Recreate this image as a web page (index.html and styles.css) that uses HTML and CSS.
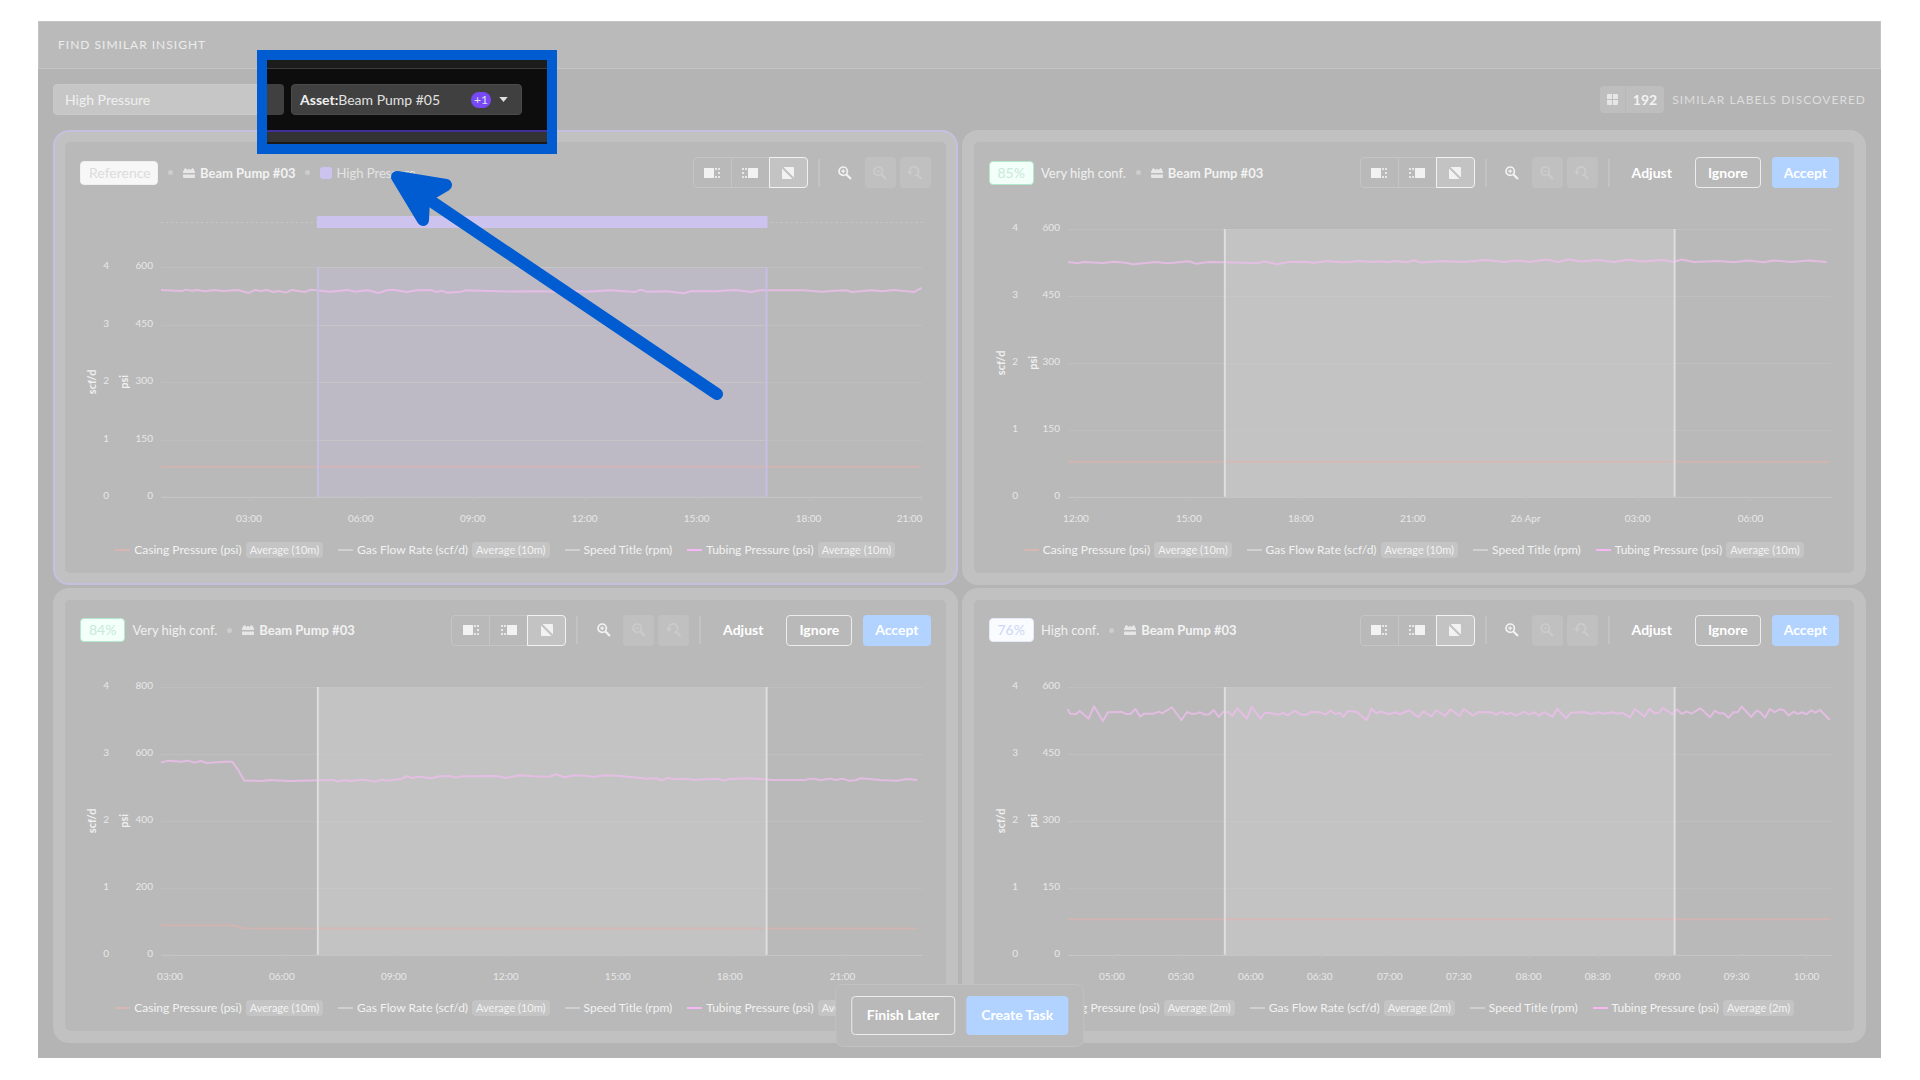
FILE: index.html
```html
<!DOCTYPE html>
<html lang="en">
<head>
<meta charset="utf-8">
<title>Find Similar Insight</title>
<link rel="stylesheet" href="styles.css">
</head>
<body>
<svg class="sprite" aria-hidden="true">
  <symbol id="i-brick" viewBox="0 0 12 12"><path d="M0 6V4.500A1 1 0 0 1 1 3.500V2.200L2.500 1 4 2.200l.5.800L6 1.800 7.500 3l.5-.800L9.500 1 11 2.200v1.300a1 1 0 0 1 1 1V6zM0 7.500h12V10a1 1 0 0 1-1 1H1a1 1 0 0 1-1-1z"/></symbol>
  <symbol id="i-left" viewBox="0 0 16 12"><path d="M0 1h10v10H0z"/><path d="M11 1h2v2h-2zM14 1h2v2h-2zM11 9h2v2h-2zM14 9h2v2h-2zM14 5h2v2h-2z" opacity=".8"/></symbol>
  <symbol id="i-right" viewBox="0 0 16 12"><path d="M6 1h10v10H6z"/><path d="M0 1h2v2H0zM3 1h2v2H3zM0 9h2v2H0zM3 9h2v2H3zM0 5h2v2H0z" opacity=".8"/></symbol>
  <symbol id="i-none" viewBox="0 0 12 12"><path d="M1.500 0H11a1 1 0 0 1 1 1v9.500zM0 1.500 10.500 12H1a1 1 0 0 1-1-1z"/></symbol>
  <symbol id="i-zoom-in" viewBox="0 0 14 14"><g fill="none" stroke="currentColor"><circle cx="5.200" cy="5.200" r="4.200" stroke-width="1.700"/><path d="m8.500 8.500 4.500 4.500" stroke-width="2.200"/><path d="M5.200 3.200v4M3.200 5.200h4" stroke-width="1.200"/></g></symbol>
  <symbol id="i-zoom-out" viewBox="0 0 14 14"><g fill="none" stroke="currentColor"><circle cx="5.200" cy="5.200" r="4.200" stroke-width="1.700"/><path d="m8.500 8.500 4.500 4.500" stroke-width="2.200"/><path d="M3.200 5.200h4" stroke-width="1.200"/></g></symbol>
  <symbol id="i-zoom-reset" viewBox="0 0 16 14"><path d="M2.800 6A4.400 4.400 0 1 1 8 9.600M10 8.500l4.500 4.500" fill="none" stroke="currentColor" stroke-width="1.800"/><path d="M0 5.500h6L3 9z"/></symbol>
  <symbol id="i-grid" viewBox="0 0 12 12"><path d="M1 0h4.500v5.500H0V1a1 1 0 0 1 1-1zM6.500 0H11a1 1 0 0 1 1 1v4.500H6.500zM0 6.500h5.500V12H1a1 1 0 0 1-1-1zM6.500 6.500H12V11a1 1 0 0 1-1 1H6.500z"/></symbol>
</svg>

<main class="app">
  <header class="topbar"><h1>Find Similar Insight</h1></header>

  <div class="filters">
    <input class="field" type="text" value="High Pressure" aria-label="Label">
    <div class="found">
      <span class="count"><svg><use href="#i-grid"/></svg><b>192</b></span>
      <span>Similar labels discovered</span>
    </div>
  </div>

  <div class="cards">
    <section class="card card-reference">
      <div class="panel">
        <div class="bar">
          <div class="facts">
            <span class="badge badge-ref">Reference</span><i class="dot"></i>
            <span class="asset"><svg><use href="#i-brick"/></svg>Beam Pump #03</span><i class="dot"></i>
            <span class="tag"><i class="swatch"></i>High Pressure</span>
          </div>
          <div class="tools">
            <div class="segments">
              <button aria-label="Keep left"><svg><use href="#i-left"/></svg></button>
              <button aria-label="Keep right"><svg><use href="#i-right"/></svg></button>
              <button class="on" aria-label="No shift"><svg class="sq"><use href="#i-none"/></svg></button>
            </div>
            <i class="rule"></i>
            <div class="zooms">
              <button aria-label="Zoom in"><svg><use href="#i-zoom-in"/></svg></button>
              <button disabled aria-label="Zoom out"><svg><use href="#i-zoom-out"/></svg></button>
              <button disabled aria-label="Reset zoom"><svg class="wide"><use href="#i-zoom-reset"/></svg></button>
            </div>
          </div>
        </div>
        <svg class="chart" data-chart="0" viewBox="0 0 881 330"></svg>
        <ul class="legend" data-window="10m"></ul>
      </div>
    </section>

    <section class="card">
      <div class="panel">
        <div class="bar">
          <div class="facts">
            <span class="badge badge-green">85%</span><span class="conf">Very high conf.</span><i class="dot"></i>
            <span class="asset"><svg><use href="#i-brick"/></svg>Beam Pump #03</span>
          </div>
          <div class="tools">
            <div class="segments">
              <button aria-label="Keep left"><svg><use href="#i-left"/></svg></button>
              <button aria-label="Keep right"><svg><use href="#i-right"/></svg></button>
              <button class="on" aria-label="No shift"><svg class="sq"><use href="#i-none"/></svg></button>
            </div>
            <i class="rule"></i>
            <div class="zooms">
              <button aria-label="Zoom in"><svg><use href="#i-zoom-in"/></svg></button>
              <button disabled aria-label="Zoom out"><svg><use href="#i-zoom-out"/></svg></button>
              <button disabled aria-label="Reset zoom"><svg class="wide"><use href="#i-zoom-reset"/></svg></button>
            </div>
            <i class="rule"></i>
            <div class="actions"><button class="btn btn-text">Adjust</button><button class="btn btn-line">Ignore</button><button class="btn btn-fill">Accept</button></div>
          </div>
        </div>
        <svg class="chart" data-chart="1" viewBox="0 0 881 330"></svg>
        <ul class="legend" data-window="10m"></ul>
      </div>
    </section>

    <section class="card">
      <div class="panel">
        <div class="bar">
          <div class="facts">
            <span class="badge badge-green">84%</span><span class="conf">Very high conf.</span><i class="dot"></i>
            <span class="asset"><svg><use href="#i-brick"/></svg>Beam Pump #03</span>
          </div>
          <div class="tools">
            <div class="segments">
              <button aria-label="Keep left"><svg><use href="#i-left"/></svg></button>
              <button aria-label="Keep right"><svg><use href="#i-right"/></svg></button>
              <button class="on" aria-label="No shift"><svg class="sq"><use href="#i-none"/></svg></button>
            </div>
            <i class="rule"></i>
            <div class="zooms">
              <button aria-label="Zoom in"><svg><use href="#i-zoom-in"/></svg></button>
              <button disabled aria-label="Zoom out"><svg><use href="#i-zoom-out"/></svg></button>
              <button disabled aria-label="Reset zoom"><svg class="wide"><use href="#i-zoom-reset"/></svg></button>
            </div>
            <i class="rule"></i>
            <div class="actions"><button class="btn btn-text">Adjust</button><button class="btn btn-line">Ignore</button><button class="btn btn-fill">Accept</button></div>
          </div>
        </div>
        <svg class="chart" data-chart="2" viewBox="0 0 881 330"></svg>
        <ul class="legend" data-window="10m"></ul>
      </div>
    </section>

    <section class="card">
      <div class="panel">
        <div class="bar">
          <div class="facts">
            <span class="badge badge-blue">76%</span><span class="conf">High conf.</span><i class="dot"></i>
            <span class="asset"><svg><use href="#i-brick"/></svg>Beam Pump #03</span>
          </div>
          <div class="tools">
            <div class="segments">
              <button aria-label="Keep left"><svg><use href="#i-left"/></svg></button>
              <button aria-label="Keep right"><svg><use href="#i-right"/></svg></button>
              <button class="on" aria-label="No shift"><svg class="sq"><use href="#i-none"/></svg></button>
            </div>
            <i class="rule"></i>
            <div class="zooms">
              <button aria-label="Zoom in"><svg><use href="#i-zoom-in"/></svg></button>
              <button disabled aria-label="Zoom out"><svg><use href="#i-zoom-out"/></svg></button>
              <button disabled aria-label="Reset zoom"><svg class="wide"><use href="#i-zoom-reset"/></svg></button>
            </div>
            <i class="rule"></i>
            <div class="actions"><button class="btn btn-text">Adjust</button><button class="btn btn-line">Ignore</button><button class="btn btn-fill">Accept</button></div>
          </div>
        </div>
        <svg class="chart" data-chart="3" viewBox="0 0 881 330"></svg>
        <ul class="legend" data-window="2m"></ul>
      </div>
    </section>
  </div>

  <div class="dock">
    <button class="btn btn-line">Finish Later</button>
    <button class="btn btn-fill">Create Task</button>
  </div>

  <div class="spotlight">
    <div class="spot-top"></div>
    <div class="spot-row">
      <i class="field-end"></i>
      <div class="asset-filter">
        <label for="asset">Asset:</label>
        <select id="asset"><option>Beam Pump #05</option></select>
        <span class="more">+1</span>
        <svg viewBox="0 0 10 6"><path d="M0 0h10L5 6z"/></svg>
      </div>
    </div>
    <div class="spot-card"></div>
  </div>
  <svg class="pointer" viewBox="0 0 340 240" aria-hidden="true">
    <path d="M13 13 62 21 40 34 39 56z" class="pointer-head"/>
    <path d="M38 31 333 230" class="pointer-shaft"/>
  </svg>
</main>
<script src="charts.js"></script>
</body>
</html>
```
FILE: styles.css
```css
* { box-sizing: border-box; }

body {
  margin: 0;
  background: #fff;
  font-family: Lato, "Noto Sans", sans-serif;
  font-size: 14px;
  line-height: 20px;
  color: #f2f2f2;
}

button, input, select { font: inherit; color: inherit; }
button { padding: 0; border: 0; background: none; display: flex; align-items: center; justify-content: center; }
svg { fill: currentColor; display: block; }
.sprite { position: absolute; width: 0; height: 0; }

.app {
  position: relative;
  margin: 21px 39px 22px 38px;
  padding-bottom: 15px;
  background: #b4b4b4;
}

.topbar {
  height: 48px;
  padding: 0 19px;
  display: flex;
  align-items: center;
  background: #bababa;
  border: 1px solid #c4c4c4;
}
.topbar h1 {
  margin: 0;
  font-size: 12px;
  font-weight: 400;
  letter-spacing: 1px;
  text-transform: uppercase;
  color: #ececec;
}

.filters {
  height: 61px;
  padding: 0 15px;
  display: flex;
  align-items: center;
  justify-content: space-between;
}
.field {
  width: 231px;
  height: 31px;
  padding: 0 11px;
  border: 1px solid #c9c9c9;
  border-radius: 4px;
  background: #c6c6c6;
  color: #f0f0f0;
}
.found {
  display: flex;
  align-items: center;
  gap: 8px;
  font-size: 12px;
  letter-spacing: 1px;
  text-transform: uppercase;
  color: #dedede;
}
.count {
  display: flex;
  align-items: center;
  height: 27px;
  border-radius: 4px;
  background: #bebebe;
  letter-spacing: 0;
  font-size: 14px;
  color: #f2f2f2;
}
.count svg { width: 11px; height: 11px; margin: 0 7px; fill: #e6e6e6; }
.count b { padding: 0 7px; line-height: 27px; border-left: 1px solid #b9b9b9; }

.cards {
  padding: 0 15px;
  display: grid;
  grid-template-columns: 1fr 1fr;
  gap: 3px 4px;
}
.card {
  padding: 10px;
  border: 2px solid #c1c1c1;
  border-radius: 16px;
  background: #c1c1c1;
}
.card-reference { border-color: #c6bfe0; }
.panel {
  padding: 15px 0;
  border-radius: 5px;
  background: #b9b9b9;
}

.bar {
  height: 31px;
  padding: 0 15px;
  display: flex;
  align-items: center;
  justify-content: space-between;
}
.facts, .asset, .tag, .tools, .segments, .zooms, .actions { display: flex; align-items: center; }
.facts { font-size: 13px; }
.badge {
  height: 24px;
  padding: 0 8px;
  border: 1px solid;
  border-radius: 4px;
  font-size: 14px;
  line-height: 22px;
}
.badge-ref { width: 78px; background: #f7f7f7; border-color: #f0f0f0; color: #dcdcdc; text-align: center; }
.badge-green { background: #f3fff9; border-color: #b4e8cd; color: #c8ead8; }
.badge-blue { background: #fafbff; border-color: #e4e9f8; color: #cbd7f6; }
.conf { margin-left: 7px; color: #f0f0f0; }
.dot { width: 5px; height: 5px; margin: 0 10px; border-radius: 50%; background: #cdcdcd; }
.asset { gap: 5px; font-weight: 700; }
.asset svg { width: 12px; height: 12px; fill: #e6e6e6; }
.tag { gap: 4px; color: #e4e4e4; }
.swatch { width: 12px; height: 12px; border-radius: 3px; background: #ccc3ee; }

.segments button {
  width: 39px;
  height: 31px;
  border: 1px solid #c5c5c5;
  margin-left: -1px;
}
.segments button:first-child { margin-left: 0; border-radius: 4px 0 0 4px; }
.segments .on { border-color: #f2f2f2; border-radius: 0 4px 4px 0; background: #c3c3c3; }
.segments svg { width: 16px; height: 12px; }
.segments .sq { width: 12px; }
.rule { width: 2px; height: 28px; margin: 0 10px; background: #c3c3c3; }
.zooms { gap: 4px; }
.zooms button { width: 31px; height: 31px; border-radius: 4px; }
.zooms button:disabled { background: #c0c0c0; color: #cbcbcb; }
.zooms svg { width: 14px; height: 14px; }
.zooms .wide { width: 16px; }

.btn { height: 31px; padding: 0 12px; border-radius: 4px; font-weight: 700; color: #fff; }
.btn-line { border: 1px solid #ececec; }
.btn-fill { background: #b2d3ff; }
.actions { gap: 11px; }

.chart { width: 100%; height: auto; margin-top: 14px; font-size: 10px; }
.chart text { fill: #e8e8e8; }
.chart .unit { font-size: 11px; font-weight: 700; fill: #f0f0f0; }
.grid { stroke: #c0c0c0; }
.axis { stroke: #c8c8c8; }
.lane { stroke: #c9c9c9; stroke-dasharray: 2 3; }
.lane-bar { fill: #ccc3ee; }
.band { fill: #c3c3c3; }
.band-edge { stroke: #dedede; stroke-width: 2; }
.reference .band { fill: #bdbac6; }
.reference .band-edge { stroke: #c6bfe4; }
.band-grid { stroke: #fff; stroke-opacity: .12; }
.tubing { fill: none; stroke: #edbdec; stroke-width: 2; stroke-opacity: .8; stroke-linejoin: round; }
.casing { fill: none; stroke: #e0b3ae; stroke-width: 2; stroke-opacity: .6; }

.legend {
  margin: 10px 0 0;
  padding: 0;
  height: 16px;
  display: flex;
  justify-content: center;
  gap: 15px;
  list-style: none;
  font-size: 12px;
  line-height: 16px;
  white-space: nowrap;
  color: #f2f2f2;
}
.legend li { display: flex; align-items: center; gap: 4px; }
.legend .key { width: 15px; height: 2px; background: #d0d0d0; }
.legend .key-casing { background: #d8b6b2; }
.legend .key-tubing { background: #f5b8f5; }
.legend .agg { padding: 0 4px; border-radius: 4px; background: #c4c4c4; font-size: 11px; }

.dock {
  position: absolute;
  bottom: 11px;
  left: 50%;
  transform: translateX(-50%);
  display: flex;
  gap: 11px;
  padding: 11px 15px;
  border: 1px solid #c2c2c2;
  border-radius: 8px;
  background: #b9b9b9;
}
.dock .btn { height: 39px; padding: 0 15px; white-space: nowrap; }

/* Highlighted asset filter shown over the dimmed page */
.spotlight {
  position: absolute;
  left: 219px;
  top: 29px;
  width: 300px;
  border: 10px solid #005cd0;
  background: #0d0d0d;
}
.spot-top { height: 9px; background: #1c1c1c; border-bottom: 1px solid #3c3c3c; }
.spot-row { height: 61px; display: flex; align-items: center; gap: 7px; }
.field-end { width: 17px; height: 31px; border-radius: 0 4px 4px 0; background: #404040; }
.asset-filter {
  width: 231px;
  height: 31px;
  padding: 0 13px 0 8px;
  display: flex;
  align-items: center;
  border: 1px solid #4a4a4a;
  border-radius: 4px;
  background: #404040;
  color: #e0e0e0;
}
.asset-filter label { font-weight: 700; color: #f0f0f0; }
.asset-filter select { flex: 1; min-width: 0; padding: 0; border: 0; background: none; appearance: none; }
.more { height: 16px; padding: 0 3px; border-radius: 8px; background: #7748f5; font-size: 12px; line-height: 16px; }
.asset-filter svg { width: 9px; height: 5px; margin-left: 8px; }
.spot-card { height: 14px; border-top: 2px solid #42309a; border-bottom: 2px solid #191919; background: #333; }

.pointer { position: absolute; left: 346px; top: 143px; width: 340px; height: 240px; }
.pointer path { stroke: #005cd0; stroke-width: 12; stroke-linecap: round; stroke-linejoin: round; }
.pointer-head { fill: #005cd0; }
.pointer-shaft { fill: none; }
```
FILE: charts.js
```js
const RIGHT = 858, BOTTOM = 295;

// Each series keeps its samples as x,y pairs plus the scale that maps them to the plot.
const charts = [
  {
    reference: true, left: 96, band: [253, 702], top: 65, psi: [600, 450, 300, 150, 0],
    ticks: [['03:00', 184], ['06:00', 296], ['09:00', 408], ['12:00', 520], ['15:00', 632], ['18:00', 744], ['21:00', 856, 845]],
    sx: 1, ox: 0, sy: 1, oy: 0,
    tubing: '96,88 117,89 121,87.7 127,88.7 132,88 140,89.3 150,88 158,89 173,88 184,91 190,88 196,89 202,88 208,90 214,89 221,90.7 227,88 240,90 246,87.7 265,89.7 283,88 290,89.7 303,88.3 314,91 322,88.3 328,87.7 342,90 352,88.3 365,88 372,90 377,88.7 382,90.7 396,89.7 402,88.3 440,89.5 475,89.3 493,89.7 507,88.7 521,89.7 546,88.3 570,90 576,87.7 582,89.7 602,89.3 619,91.3 627,89 650,89.3 670,88 687,90 695,88.3 739,88.3 757,89.7 771,88.7 782,88.3 787,90 807,88.3 818,89.3 829,88 850,90 857,86',
    casing: '96,265 857,265'
  },
  {
    left: 94, band: [251, 701], top: 27, psi: [600, 450, 300, 150, 0],
    ticks: [['12:00', 102], ['15:00', 215], ['18:00', 327], ['21:00', 439], ['26 Apr', 552], ['03:00', 664], ['06:00', 777]],
    sx: 1, ox: 0, sy: 1, oy: 0,
    tubing: '94,60 104,61.3 109,60 130,61 140,59.7 152,60.7 159,62.3 182,60 194,61.3 215,59.3 222,61.7 235,60 270,60.7 284,61.3 290,59.3 303,62.3 315,60 330,59.7 340,60.7 354,59 367,60.3 377,60 384,59 400,60 407,59.3 415,60.3 421,59 434,60.3 440,58.3 447,60.5 470,59 490,60 512,58 530,60 545,58.5 556,60 573,57.5 584,60 595,57.5 607,59.5 625,58 640,60 655,57.8 668,59.5 690,58 700,60 708,57.5 720,60 745,59 760,60.3 775,58.5 790,60.3 800,58.5 818,60 835,58.5 853,60',
    casing: '94,260 856,260'
  },
  {
    left: 96, band: [253, 702], top: 27, psi: [800, 600, 400, 200, 0],
    ticks: [['03:00', 105], ['06:00', 217], ['09:00', 329], ['12:00', 441], ['15:00', 553], ['18:00', 665], ['21:00', 778]],
    sx: 1 / 3, ox: -25, sy: 1 / 3, oy: -80,
    tubing: '363,548 385,542 425,545 445,542 463,548 483,543 500,549 555,545 577,545 595,570 613,602 668,603 690,600 745,603 880,600 893,605 912,601 935,603 968,599 1008,605 1025,599 1045,602 1085,597 1102,589 1117,594 1135,590 1175,595 1200,589 1230,588 1248,593 1270,589 1370,588 1398,594 1440,586 1480,589 1530,590 1548,583 1575,592 1605,586 1640,587 1660,591 1695,586 1740,588 1825,596 1850,595 1867,601 1885,594 1905,598 1940,596 1960,600 2035,596 2053,602 2070,597 2125,595 2200,600 2295,600 2313,596 2345,600 2370,596 2390,600 2408,596 2428,602 2447,601 2465,595 2520,600 2575,602 2600,597 2633,600',
    casing: '363,1036 578,1036 613,1046 2633,1046'
  },
  {
    left: 94, band: [251, 701], top: 27, psi: [600, 450, 300, 150, 0],
    ticks: [['05:00', 138], ['05:30', 207], ['06:00', 277], ['06:30', 346], ['07:00', 416], ['07:30', 485], ['08:00', 555], ['08:30', 624], ['09:00', 694], ['09:30', 763], ['10:00', 833]],
    sx: 0.5995, ox: -13, sy: 1 / 3, oy: -70,
    tubing: '178,357 182,371 192,372 198,363 213,386 222,349 237,393 245,367 268,366 275,372 283,372 291,357 299,380 306,371 322,371 330,365 336,370 352,352 368,391 377,366 384,371 392,371 399,367 407,374 414,373 422,360 430,381 438,365 446,366 453,377 461,355 477,386 485,351 500,386 507,369 515,369 530,374 538,369 545,376 557,363 568,374 577,374 585,366 600,367 608,374 617,362 625,373 632,368 638,381 646,363 660,365 677,391 685,356 693,370 700,365 715,372 725,367 732,373 748,361 763,382 772,364 785,380 793,361 808,378 817,358 832,378 839,357 855,377 863,366 885,367 893,374 902,366 910,373 918,368 925,377 940,365 948,374 957,367 965,377 973,366 987,381 995,357 1010,385 1018,368 1040,366 1052,372 1062,367 1072,371 1088,367 1095,371 1103,368 1117,382 1125,357 1141,380 1149,356 1157,370 1165,368 1172,354 1187,373 1195,358 1203,372 1211,364 1219,371 1234,355 1250,382 1258,362 1265,370 1273,370 1281,383 1289,367 1296,367 1303,350 1319,381 1328,362 1334,367 1342,383 1350,357 1358,367 1366,358 1374,361 1381,377 1390,365 1396,372 1404,367 1411,373 1419,361 1426,368 1434,360 1450,390',
    casing: '178,988 1451,988'
  }
];

const line = (cls, x1, y1, x2, y2) => `<line class="${cls}" x1="${x1}" y1="${y1}" x2="${x2}" y2="${y2}"/>`;

function draw(c) {
  const map = s => s.split(' ').map(p => {
    const [x, y] = p.split(',').map(Number);
    return (x * c.sx + c.ox).toFixed(1) + ',' + (y * c.sy + c.oy).toFixed(1);
  }).join(' ');
  const step = (BOTTOM - c.top) / 4;
  const [from, to] = c.band;
  let out = `<g${c.reference ? ' class="reference"' : ''}>`;
  if (c.reference) {
    out += line('lane', c.left, 20.5, RIGHT, 20.5);
    out += `<rect class="lane-bar" x="${from - 1}" y="14" width="${to - from + 2}" height="12" rx="1"/>`;
  }
  out += `<rect class="band" x="${from}" y="${c.top}" width="${to - from}" height="${BOTTOM - c.top}"/>`;
  c.psi.forEach((v, i) => {
    const y = Math.round(c.top + step * i);
    out += line(i === 4 ? 'axis' : 'grid', c.left, y + 0.5, RIGHT, y + 0.5);
    if (i < 4) out += line('band-grid', from, y + 0.5, to, y + 0.5);
    out += `<text x="44" y="${y + 2}" text-anchor="end">${4 - i}</text>`;
    out += `<text x="${c.left - 8}" y="${y + 2}" text-anchor="end">${v}</text>`;
  });
  c.ticks.forEach(([label, x, at]) => {
    out += line('grid', x + 0.5, BOTTOM, x + 0.5, BOTTOM + 4);
    out += `<text x="${at || x}" y="320" text-anchor="middle">${label}</text>`;
  });
  out += `<polyline class="casing" points="${map(c.casing)}"/><polyline class="tubing" points="${map(c.tubing)}"/>`;
  c.band.forEach(x => { out += line('band-edge', x, c.top, x, BOTTOM); });
  const mid = (c.top + BOTTOM) / 2;
  out += `<text class="unit" text-anchor="middle" transform="translate(31 ${mid}) rotate(-90)">scf/d</text>`;
  out += `<text class="unit" text-anchor="middle" transform="translate(63 ${mid}) rotate(-90)">psi</text>`;
  return out + '</g>';
}

document.querySelectorAll('[data-chart]').forEach(el => { el.innerHTML = draw(charts[el.dataset.chart]); });

const series = [
  ['Casing Pressure (psi)', 'key key-casing', true],
  ['Gas Flow Rate (scf/d)', 'key', true],
  ['Speed Title (rpm)', 'key', false],
  ['Tubing Pressure (psi)', 'key key-tubing', true]
];
document.querySelectorAll('.legend').forEach(el => {
  el.innerHTML = series.map(([name, key, agg]) =>
    `<li><i class="${key}"></i><span>${name}</span>${agg ? `<span class="agg">Average (${el.dataset.window})</span>` : ''}</li>`).join('');
});
```
